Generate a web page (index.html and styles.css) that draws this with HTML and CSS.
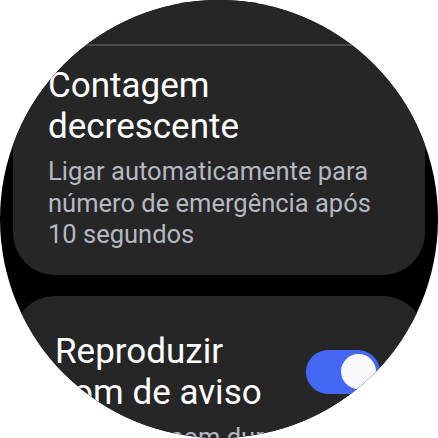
FILE: index.html
```html
<!DOCTYPE html>
<html lang="pt">
<head>
    <meta charset="UTF-8">
    <meta name="viewport" content="width=device-width, initial-scale=1.0">
    <title>SOS</title>
    <link rel="stylesheet" href="styles.css">
</head>
<body>

    <div class="watch">
        <div class="list">

            <!-- Contagem decrescente -->
            <div class="card">
                <div class="prev"></div>
                <div class="divider"></div>
                <div class="item">
                    <div class="title">Contagem decrescente</div>
                    <div class="sub">Ligar automaticamente para número de emergência após 10 segundos</div>
                </div>
            </div>

            <!-- Som de aviso -->
            <div class="card">
                <div class="item item-toggle">
                    <div class="row">
                        <div class="title title-narrow">Reproduzir som de aviso</div>
                        <div class="switch on"><span class="knob"></span></div>
                    </div>
                    <div class="sub">Emitir um som durante a contagem</div>
                </div>
            </div>

        </div>
    </div>

</body>
</html>
```

FILE: styles.css
```css
body {
    margin: 0;
    background-color: #ffffff;
    font-family: Roboto, "Liberation Sans", sans-serif;
}
.watch {
    width: 438px;
    height: 438px;
    border-radius: 50%;
    overflow: hidden;
    background-color: #000000;
}
.list {
    display: flex;
    flex-direction: column;
    gap: 21px;
    margin: -40px 13px 0 13px;
}
.card {
    background-color: #262626;
    border-radius: 42px;
}
.prev {
    height: 84px;
}
.divider {
    height: 2px;
    background-color: #4a4a4a;
}
.item {
    padding: 19px 32px 24px 35px;
}
.item-toggle {
    padding: 35px 45px 24px 42px;
}
.title {
    color: #ffffff;
    font-size: 35px;
    line-height: 41px;
    font-weight: 400;
}
.title-narrow {
    width: 230px;
}
.sub {
    margin-top: 9px;
    color: #b4b9c1;
    font-size: 25.5px;
    line-height: 31.5px;
}
.row {
    display: flex;
    align-items: center;
    justify-content: space-between;
}
.switch {
    width: 74px;
    height: 44px;
    border-radius: 22px;
    background-color: #4568f4;
    display: flex;
    align-items: center;
    justify-content: flex-end;
    padding: 0 4px;
    box-sizing: border-box;
    flex-shrink: 0;
}
.knob {
    width: 35px;
    height: 35px;
    border-radius: 50%;
    background-color: #f8f8fc;
}
```
